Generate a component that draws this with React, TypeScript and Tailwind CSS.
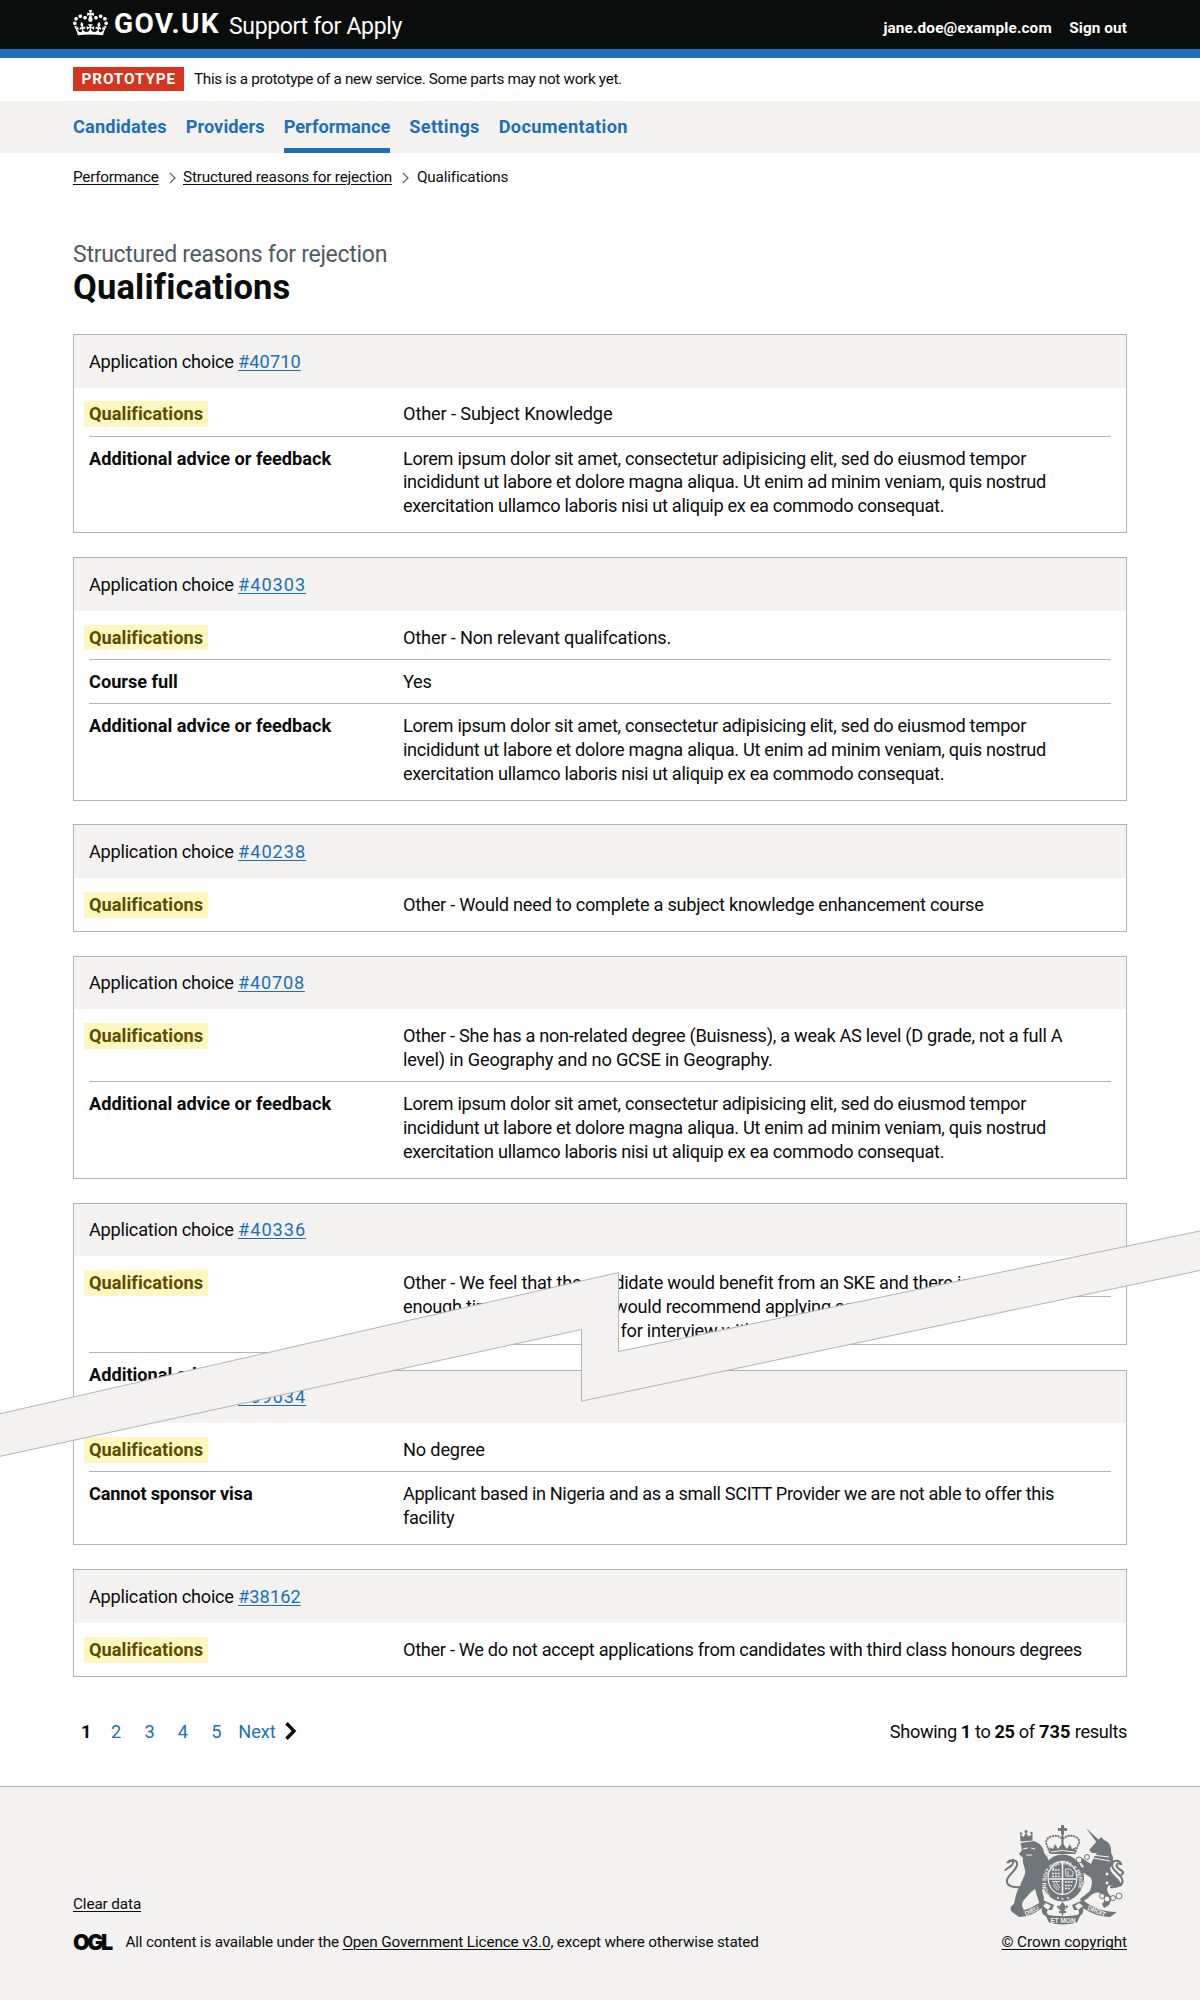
import type { ReactNode } from 'react';

type RowData = { label: string; lines: [string, string?][]; tag?: boolean };

const lorem: [string, string?][] = [
  ['Lorem ipsum dolor sit amet, consectetur adipisicing elit, sed do eiusmod tempor', 'tracking-[-0.0170em]'],
  ['incididunt ut labore et dolore magna aliqua. Ut enim ad minim veniam, quis nostrud', 'tracking-[-0.0170em]'],
  ['exercitation ullamco laboris nisi ut aliquip ex ea commodo consequat.', 'tracking-[-0.0180em]'],
];
const advice: RowData = { label: 'Additional advice or feedback', lines: lorem };
const quals = (...lines: [string, string?][]): RowData => ({ label: 'Qualifications', lines, tag: true });

function Crown() {
  return (
    <svg viewBox="0 0 132 97" className="mt-[10px] h-[25.6px] w-[35px] fill-white" preserveAspectRatio="none">
      <path
        fillRule="evenodd"
        d="M25 30.2c3.5 1.5 7.7-.2 9.1-3.7 1.5-3.6-.2-7.8-3.9-9.2-3.6-1.4-7.6.3-9.1 3.9-1.4 3.5.3 7.5 3.9 9zM9 39.5c3.6 1.5 7.8-.2 9.2-3.7 1.5-3.6-.2-7.8-3.9-9.1-3.6-1.5-7.6.2-9.1 3.8-1.4 3.5.3 7.5 3.8 9zM4.4 57.2c3.5 1.5 7.7-.2 9.1-3.8 1.5-3.6-.2-7.7-3.9-9.1-3.5-1.5-7.6.3-9.1 3.8-1.4 3.5.3 7.6 3.9 9.1zm38.3-21.4c3.5 1.5 7.7-.2 9.1-3.8 1.5-3.6-.2-7.7-3.9-9.1-3.6-1.5-7.6.3-9.1 3.8-1.3 3.6.4 7.7 3.9 9.1zm64.4-5.6c-3.6 1.5-7.8-.2-9.1-3.7-1.5-3.6.2-7.8 3.8-9.2 3.6-1.4 7.7.3 9.2 3.9 1.3 3.5-.4 7.5-3.9 9zm15.9 9.3c-3.6 1.5-7.7-.2-9.1-3.7-1.5-3.6.2-7.8 3.7-9.1 3.6-1.5 7.7.2 9.2 3.8 1.5 3.5-.3 7.5-3.8 9zm4.7 17.7c-3.6 1.5-7.8-.2-9.2-3.8-1.5-3.6.2-7.7 3.9-9.1 3.6-1.5 7.7.3 9.2 3.8 1.3 3.5-.4 7.6-3.9 9.1zM89.3 35.8c-3.6 1.5-7.8-.2-9.2-3.8-1.4-3.6.2-7.7 3.9-9.1 3.6-1.5 7.7.3 9.2 3.8 1.4 3.6-.3 7.7-3.9 9.1zM69.7 17.7l8.9 4.7V9.3l-8.9 2.8c-.2-.3-.5-.6-.9-.9L72.4 0H59.6l3.5 11.2c-.3.3-.6.5-.9.9l-8.8-2.8v13.1l8.8-4.7c.3.3.6.7.9.9l-5 15.4v.1c-.2.8-.4 1.6-.4 2.4 0 4.1 3.1 7.5 7 8.1h.2c.3 0 .7.1 1 .1.4 0 .7 0 1-.1h.2c4-.6 7.1-4.1 7.1-8.1 0-.8-.1-1.7-.4-2.4V34l-5.1-15.4c.4-.2.7-.6 1-.9zM66 92.8c16.9 0 32.8 1.1 47.1 3.2 4-16.9 8.9-26.7 14-33.5l-9.6-3.4c1 4.9 1.1 7.2 0 10.2-1.5-1.4-3-4.3-4.2-8.7L108.6 76c2.8-2 5-3.2 7.5-3.3-4.4 9.4-10 11.9-13.6 11.2-4.3-.8-6.3-4.6-5.6-7.9 1-4.7 5.7-5.9 8-.5 4.3-8.7-3-11.4-7.6-8.8 7.1-7.2 7.9-13.5 2.1-21.1-8 6.1-8.1 12.3-4.5 20.8-4.7-5.4-12.1-2.5-9.5 6.2 3.4-5.2 7.9-2 7.2 3.1-.6 4.3-6.4 7.8-13.5 7.2-10.3-.9-10.9-8-11.2-13.8 2.5-.5 7.1 1.8 11 7.3L80.2 60c-4.1 4.4-8 5.3-12.3 5.4 1.4-4.4 8-11.6 8-11.6H55.5s6.4 7.2 7.9 11.6c-4.2-.1-8-1-12.3-5.4l1.4 16.4c3.9-5.5 8.5-7.7 10.9-7.3-.3 5.8-.9 12.8-11.1 13.8-7.2.6-12.9-2.9-13.5-7.2-.7-5 3.8-8.3 7.1-3.1 2.7-8.7-4.6-11.6-9.4-6.2 3.7-8.5 3.6-14.7-4.6-20.8-5.8 7.6-5 13.9 2.2 21.1-4.7-2.6-11.9.1-7.7 8.8 2.3-5.5 7.1-4.2 8.1.5.7 3.3-1.3 7.1-5.7 7.9-3.5.7-9-1.8-13.5-11.2 2.5.1 4.7 1.3 7.5 3.3l-4.7-15.4c-1.2 4.4-2.7 7.2-4.3 8.7-1.1-3-.9-5.3 0-10.2l-9.5 3.4c5 6.9 9.9 16.7 14 33.5 14.8-2.1 30.8-3.2 47.7-3.2z"
      />
    </svg>
  );
}

function CoatOfArms() {
  const bg = '#f3f2f1';
  return (
    <svg viewBox="0 0 130 110" className="-mr-[3px] h-[110px] w-[130px]" fill="#6f777b" stroke="none">
      {/* lion */}
      <path d="M20.500 21.500 L20 14.500 L23.500 17 L26 12.500 L28.500 16.500 L32.500 14 L32.500 20.500 Z" />
      <circle cx="26" cy="11.500" r="1.500" />
      <circle cx="21" cy="13.500" r="1.200" />
      <circle cx="31.500" cy="13" r="1.200" />
      <path d="M20.500 23 L34 21 C40 23 44 28 44 33 C48 37 50 42 49 46 L46 49 C45 54 47 56 50 57 L53 63 C49 66 44 66 42 70 L44 78 C43 82 46 84 50 88 L47 90 L41 87 L37 76 L35 69 C30 72 28 76 24 80 C21 84 22 87 24 90 L19 93 L12 92 C9 88 11 86 14 84 C15 78 17 70 20 66 C22 60 26 55 25 50 C24 45 22 42 23 38 L19 34 L22 30 Z" />
      <path d="M22 67 C13 68 6 66 7 60 C8 55 16 51 17 45 C18 40 11 38 7 43 M8 43 C11 39 15 41 12 45 C9 48 5 49 5 51" fill="none" stroke="#6f777b" strokeWidth="2" />
      <path d="M23 29 L28 28 M31 28 L35 29 M26 35 L32 35" stroke={bg} strokeWidth="1" />
      <path d="M45 49 L57 46 M46 54 L56 55" stroke="#6f777b" strokeWidth="2.500" />
      {/* unicorn */}
      <path d="M86 8 L100 21 L97 23 Z" />
      <path d="M98 20 L101 17 L104 20 C110 22 112 28 111 33 C114 37 114 43 110 48 C111 53 115 56 119 60 L122 66 L115 67 L109 65 C105 70 108 73 112 78 L109 85 L104 88 L102 84 L106 79 L101 74 C96 70 91 75 88 78 L82 82 L80 79 L90 71 C92 65 93 60 90 57 L82 52 L77 53 L76 49 L84 47 L80 41 L82 38 L91 44 L94 37 L97 33 L92 33 L89 30 Z" />
      <path d="M93 38 L110 41 M92 35 L109 37" stroke={bg} strokeWidth="1.200" />
      <path d="M110 67 C119 68 124 64 122 59 C121 54 112 51 112 45 C113 39 120 40 121 44 C115 42 116 47 119 49 C123 51 125 53 121 55" fill="none" stroke="#6f777b" strokeWidth="2" />
      <g fill={bg} stroke="#6f777b" strokeWidth="1">
        <circle cx="79" cy="40" r="3" />
        <circle cx="87" cy="37" r="2.500" />
        <circle cx="77" cy="47" r="2" />
        <circle cx="107" cy="54" r="2" />
        <circle cx="107" cy="63" r="2" />
        <circle cx="102" cy="76" r="2.500" />
        <circle cx="107" cy="79" r="3" />
        <circle cx="113" cy="78" r="2.500" />
        <circle cx="119" cy="76" r="3" />
      </g>
      {/* crown */}
      <path d="M61 8 L61 5 L64 5 L64 8 L67 8 L67 11 L64 11 L64 14 L61 14 L61 11 L58 11 L58 8 Z" />
      <path d="M50 33 L46 23 C46 17 53 15 58 16 L62.500 19 L67 16 C73 15 80 17 79 23 L75 33 Z" fill={bg} stroke="#6f777b" strokeWidth="1.800" strokeDasharray="2.200 .7" />
      <path d="M62.500 14 V26" stroke="#6f777b" strokeWidth="2" />
      <path d="M51 34 L49 27 L53 29 L55 24 L58 29 L62.500 23 L67 29 L70 24 L72 29 L76 27 L74 34 Z" />
      <path d="M51 32 Q62.500 29 74 32" stroke={bg} fill="none" />
      {/* garter and shield */}
      <ellipse cx="62.500" cy="58" rx="21.500" ry="23.500" />
      <ellipse cx="62.500" cy="58" rx="15" ry="17" fill={bg} />
      <ellipse cx="62.500" cy="58" rx="13.800" ry="15.800" />
      <path id="garter" d="M50 75 A16.500 18.500 0 1 1 75 75" fill="none" />
      <text fill={bg} fontSize="5.600" fontWeight="700" fontFamily="Liberation Sans, sans-serif">
        <textPath href="#garter" textLength="73">HONI SOIT QUI MAL Y PENSE</textPath>
      </text>
      <path d="M62.500 42 V74 M49 59 H76" stroke={bg} strokeWidth="1.600" />
      <path d="M52 50 H60 M52 53.500 H60 M52 56.500 H60 M65 62 H73 M65 65.500 H72 M65 68.500 H70" stroke={bg} strokeWidth="1.300" strokeDasharray="2 .8" />
      <path d="M65.500 49 H70 L73 52 V56 H66 Z M68 51 V55 M53 62 L59 70 M53 65 L57 70 M56 62 L60 68 M52.500 61.500 H60" fill="none" stroke={bg} strokeWidth=".9" />
      <path d="M57 78 H59 M61.500 79 H63.500 M67 78 H69" stroke={bg} strokeWidth="1.500" />
      {/* motto ribbon */}
      <path d="M12 92 C22 92 33 88 43 80 L54 85 L52 90 L48 90 C46 92 47 94 49 96 C43 97 41 92 42 88 C36 93 27 97 19 97 Z" />
      <path d="M117 92 C104 92 92 88 83 80 L72 85 L74 90 L78 90 C80 92 79 94 77 96 C82 97 84 92 83 88 C90 93 101 97 110 97 Z" />
      <path d="M46 83 L51 86 L48 90 L43 86 Z M79 83 L75 86 L78 90 L83 86 Z" fill={bg} />
      <path d="M45 94 C56 97 70 97 81 94 L77 102.500 C68 105 57 105 49 102.500 Z" />
      <path d="M62.500 82 C67 87 66 90 63.500 91 L66 91 L66 93 L63.500 93 L62.500 97 L61.500 93 L59 93 L59 91 L61.500 91 C59 90 58 87 62.500 82 Z M57 87 C57 84 61 86 60 90 M68 87 C68 84 64 86 65 90" />
      <g fill={bg} fontSize="6.400" fontWeight="700" fontFamily="Liberation Sans, sans-serif">
        <text x="26" y="96" transform="rotate(-26 26 96)" textLength="15">DIEU</text>
        <text x="50.500" y="102.500" textLength="25">ET MON</text>
        <text x="87" y="89.500" transform="rotate(22 87 89.500)" textLength="19">DROIT</text>
      </g>
    </svg>
  );
}

function Card({
  id,
  rows,
  children,
  className = '',
  idTracking = 'tracking-[0.054em]',
}: {
  id: string;
  rows?: RowData[];
  children?: ReactNode;
  className?: string;
  idTracking?: string;
}) {
  return (
    <section className={`border border-[#b1b4b6] bg-white ${className}`}>
      <h2 className="h-[52.7px] bg-[#f3f2f1] px-[15px] pt-[14.800px] tracking-[-0.014em]">
        Application choice{' '}
        <a className={`text-[#1d70b8] underline decoration-1 underline-offset-[2px] ${idTracking}`}>{id}</a>
      </h2>
      <dl className="px-[15px] py-[4.8px]">
        {rows?.map((row, i) => (
          <Row key={i} row={row} last={i === rows.length - 1} />
        ))}
        {children}
      </dl>
    </section>
  );
}

function Row({ row, last, children }: { row: RowData; last?: boolean; children?: ReactNode }) {
  return (
    <div className={`flex pb-[9.300px] pt-[9.900px] ${last ? '' : 'border-b border-[#b1b4b6]'}`}>
      <dt className="w-[314px] shrink-0 font-bold tracking-[-0.001em]">
        {row.tag ? (
          <span className="-mx-[5px] -my-px inline-block bg-[#fff7bf] px-[5px] py-px leading-[23.95px] tracking-[0.003em] text-[#594d00]">
            {row.label}
          </span>
        ) : (
          <span className={row.label === 'Cannot sponsor visa' ? 'tracking-[-0.010em]' : ''}>{row.label}</span>
        )}
      </dt>
      <dd className="whitespace-nowrap">
        {row.lines.map(([line, tracking]) => (
          <p key={line} className={tracking ?? 'tracking-[-0.0163em]'}>
            {line}
          </p>
        ))}
        {children}
      </dd>
    </div>
  );
}

function Chevron() {
  return (
    <svg viewBox="0 0 7 12" className="h-[12px] w-[7px]" fill="none" stroke="#505a5f" strokeWidth="1.200">
      <path d="M.8 .8 L6 6 L.8 11.200" />
    </svg>
  );
}

const nav: [string, string][] = [
  ['Candidates', 'tracking-[0.008em]'],
  ['Providers', 'tracking-[0.004em]'],
  ['Performance', 'tracking-[0.000em]'],
  ['Settings', 'tracking-[0.016em]'],
  ['Documentation', 'tracking-[0.0180em]'],
];

export default function App() {
  return (
    <div className="relative h-[2000px] w-[1200px] overflow-hidden bg-white font-[Roboto,sans-serif] text-[18.2px] leading-[23.95px] text-[#0b0c0c]">
      <header className="h-[57.5px] border-b-[9.5px] border-[#1d70b8] bg-[#0b0c0c] px-[73px] text-white">
        <div className="flex h-[48px] items-start">
          <Crown />
          <span className="ml-[6px] mt-[8px] w-[113px] text-[28px] font-bold leading-[32px] tracking-[0.048em]">GOV.UK</span>
          <span className="ml-[2px] mt-[10.500px] text-[23px] leading-[32px] tracking-[-0.0148em]">Support for Apply</span>
          <nav className="ml-auto mt-[18px] flex gap-[17.500px] text-[15.3px] font-bold leading-[20px]">
            <a className="tracking-[0.010em]">jane.doe@example.com</a>
            <a className="tracking-[0.006em]">Sign out</a>
          </nav>
        </div>
      </header>

      <div className="flex h-[43.5px] items-start px-[73px] pt-[9.5px] text-[15.3px]">
        <strong className="h-[24px] w-[111px] bg-[#d4351c] pl-[8.5px] leading-[24px] tracking-[0.058em] text-white">PROTOTYPE</strong>
        <span className="ml-[10px] leading-[25px] tracking-[-0.0215em]">
          This is a prototype of a new service. Some parts may not work yet.
        </span>
      </div>

      <nav className="flex h-[52px] gap-[19px] bg-[#f3f2f1] px-[73px] font-bold text-[#1d70b8]">
        {nav.map(([label, tracking]) => (
          <a
            key={label}
            className={`pt-[14px] ${tracking} ${label === 'Performance' ? 'border-b-[5px] border-[#1d70b8]' : ''}`}
          >
            {label}
          </a>
        ))}
      </nav>

      <div className="flex h-[82px] items-start px-[73px] pt-[13px] text-[15.3px]">
        <a className="w-[86px] tracking-[-0.017em]"><span className="underline decoration-1 underline-offset-[2px]">Performance</span></a>
        <span className="ml-[9.500px] mt-[6px]"><Chevron /></span>
        <a className="ml-[7.500px] w-[210px] tracking-[-0.0118em] underline decoration-1 underline-offset-[2px]">
          Structured reasons for rejection
        </a>
        <span className="ml-[9px] mt-[6px]"><Chevron /></span>
        <span className="ml-[8px] tracking-[-0.012em]">Qualifications</span>
      </div>

      <main className="px-[73px]">
        <h1 className="h-[99px] pt-[5px]">
          <span className="block text-[23px] font-normal leading-[30px] tracking-[-0.0120em] text-[#505a5f]">
            Structured reasons for rejection
          </span>
          <span className="-mt-[2px] block text-[34.500px] font-bold leading-[38px] tracking-[0.005em]">Qualifications</span>
        </h1>

        <div className="flex flex-col gap-[23.700px]">
          <Card id="#40710" idTracking="tracking-[0.004em]" rows={[quals(['Other - Subject Knowledge', 'tracking-[-0.0075em]']), advice]} />
          <Card
            id="#40303"
            rows={[
              quals(['Other - Non relevant qualifcations.', 'tracking-[-0.0100em]']),
              { label: 'Course full', lines: [['Yes']] },
              advice,
            ]}
          />
          <Card
            id="#40238"
            rows={[quals(['Other - Would need to complete a subject knowledge enhancement course', 'tracking-[-0.0145em]'])]}
          />
          <Card
            id="#40708"
            idTracking="tracking-[0.042em]"
            rows={[
              quals(
                ['Other - She has a non-related degree (Buisness), a weak AS level (D grade, not a full A', 'tracking-[-0.0160em]'],
                ['level) in Geography and no GCSE in Geography.', 'tracking-[-0.0100em]'],
              ),
              advice,
            ]}
          />
          <div className="relative mb-[1.300px] h-[142.500px] border border-[#b1b4b6] px-[15px]">
            <div className="h-[93px] border-b border-[#b1b4b6]" />
            <div className="absolute -inset-x-px -top-px h-[230px] [clip-path:polygon(0_0,1054px_0,1054px_62px,527px_173px,527px_97px,0_215px)]">
              <Card id="#40336" className="h-[230px]">
                <Row row={{ label: 'Qualifications', lines: [], tag: true }}>
                  <p className="tracking-[-0.0145em]">Other - We feel that the candidate would benefit from an SKE and there is</p>
                  <p className="tracking-[-0.0145em]">
                    <span className="inline-block w-[211px]">enough time for this. We</span>would recommend applying again
                  </p>
                  <p className="tracking-[-0.0145em]">
                    <span className="inline-block w-[217.500px]">and we can arrange</span>for interview with us
                  </p>
                </Row>
                <Row row={{ label: 'Additional advice or feedback', lines: [] }} last />
              </Card>
            </div>
          </div>
          <Card
            id="#39634"
            className="-mt-[0.500px] mb-[0.500px]"
            rows={[
              quals(['No degree', 'tracking-[-0.0100em]']),
              {
                label: 'Cannot sponsor visa',
                lines: [
                  ['Applicant based in Nigeria and as a small SCITT Provider we are not able to offer this', 'tracking-[-0.0208em]'],
                  ['facility'],
                ],
              },
            ]}
          />
          <Card
            id="#38162"
            idTracking="tracking-[0.004em]"
            rows={[
              quals(['Other - We do not accept applications from candidates with third class honours degrees', 'tracking-[-0.0175em]']),
            ]}
          />
        </div>

        <div className="mt-[43px] flex h-[66.500px] items-start justify-between">
          <div className="flex pl-[8px] text-[#1d70b8]">
            <b className="w-[30px] text-[#0b0c0c]">1</b>
            <a className="w-[33.400px]">2</a>
            <a className="w-[33.400px]">3</a>
            <a className="w-[33.400px]">4</a>
            <a className="w-[27px]">5</a>
            <a className="tracking-[-0.000em]">Next</a>
            <svg viewBox="0 0 12 18" className="ml-[9px] mt-[2.500px] h-[18px] w-[12px]" fill="none" stroke="#0b0c0c" strokeWidth="3.400">
              <path d="M1.500 1.200 L9 9 L1.500 16.800" />
            </svg>
          </div>
          <p className="tracking-[-0.021em]">
            Showing <b>1</b> to <b>25</b> of <b className="tracking-[0.01em]">735</b> results
          </p>
        </div>
      </main>

      <footer className="flex h-[214px] justify-between border-t border-[#b1b4b6] bg-[#f3f2f1] px-[73px] text-[15.300px]">
        <div className="pt-[106px]">
          <a className="tracking-[-0.008em] underline decoration-1 underline-offset-[2px]">Clear data</a>
          <div className="mt-[14px] flex items-center">
            <span className="-mt-[2px] w-[52.500px] font-[Inter] text-[21.500px] font-black leading-[24px] tracking-[-0.115em]">OGL</span>
            <p className="tracking-[-0.013em]">
              All content is available under the{' '}
              <a className="tracking-[-0.008em] underline decoration-1 underline-offset-[2px]">Open Government Licence v3.0</a>, except
              where otherwise stated
            </p>
          </div>
        </div>
        <div className="flex flex-col items-end pt-[33px]">
          <CoatOfArms />
          <a className="mt-[1px] tracking-[-0.004em] underline decoration-1 underline-offset-[2px]">© Crown copyright</a>
        </div>
      </footer>

      {/* torn-page break across the list */}
      <svg className="pointer-events-none absolute left-0 top-[1220px]" width="1200" height="250" viewBox="0 1220 1200 250">
        <path
          d="M-2 1414.200 L618.500 1272.500 V1351.500 L1202 1230.600 V1270 L581.500 1401.200 V1329.500 L-2 1456.800 Z"
          fill="#f3f2f1"
          stroke="#b1b4b6"
          strokeWidth="1"
        />
      </svg>
    </div>
  );
}
